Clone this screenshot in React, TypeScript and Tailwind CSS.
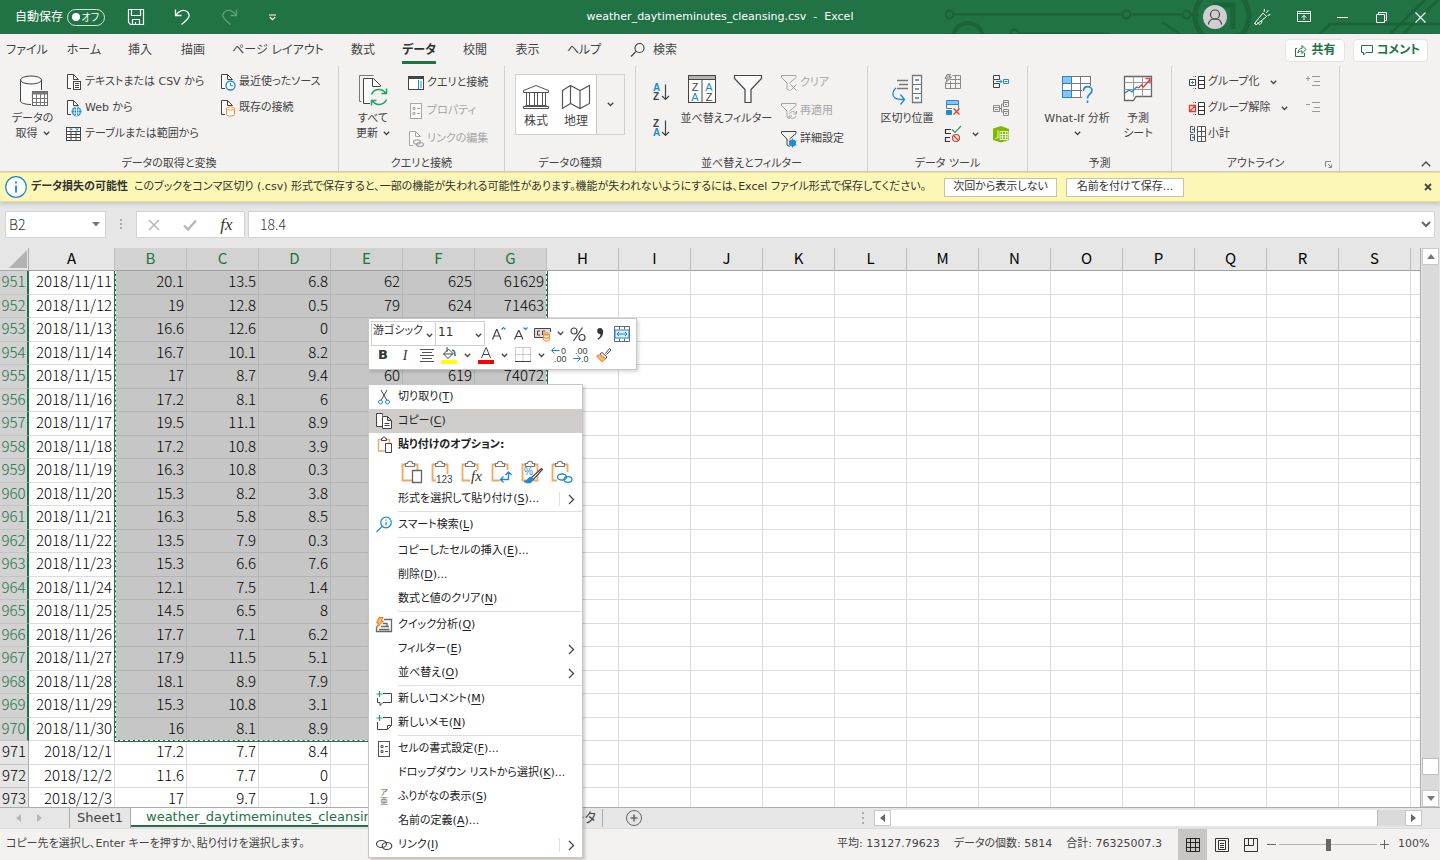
import { useState } from "react";
import type { ReactNode } from "react";
import clsx from "clsx";

const BLUE = "#1e88d2";
const GREEN = "#217346";

type IconProps = { w?: number; h?: number; color?: string; sw?: number; className?: string; children: ReactNode };

const Icon = ({ w = 18, h = 18, color = "#444", sw = 1, className, children }: IconProps) => (
  <svg
    width={w}
    height={h}
    viewBox={`0 0 ${w} ${h}`}
    fill="none"
    stroke={color}
    strokeWidth={sw}
    className={clsx("shrink-0", className)}
    aria-hidden="true"
  >
    {children}
  </svg>
);

const Chevron = ({ className, color = "#444" }: { className?: string; color?: string }) => (
  <Icon w={7} h={5} sw={1.3} color={color} className={className}>
    <path d="M.8.8l2.7 2.7L6.2.8" />
  </Icon>
);

/* ---------- ribbon icons ---------- */

const PageIcon = ({ children, color = "#444" }: { children?: ReactNode; color?: string }) => (
  <Icon color={color}>
    <path d="M6.5 15.500h-4v-14h7l5 4.500v2" fill="#fafafa" stroke="none" />
    <path d="M6 15.500H2.500v-14h6l5 5M8.500 1.500v5h5" />
    {children}
  </Icon>
);

const DatabaseIcon = () => (
  <Icon w={30} h={34}>
    <path d="M3 6v21c0 2 4.500 3 10 3V17h10V6z" fill="#fafafa" stroke="none" />
    <ellipse cx="13" cy="6" rx="10.500" ry="4" fill="#fafafa" />
    <path d="M2.500 6v21c0 2 4.500 3.500 10.500 3.500M23.500 6v10" />
    <rect x="14.500" y="17.500" width="15" height="14" fill="#fff" stroke="#666" />
    <path d="M14.500 19h15" strokeWidth="3" stroke="#777" />
    <path d="M14.500 24.500h15M14.500 28.500h15M18.500 18v14M22.500 18v14M26.500 18v14" stroke="#777" />
  </Icon>
);

const TextFileIcon = () => (
  <PageIcon>
    <rect x="8.500" y="8.500" width="7" height="8" fill="#fff" />
    <path d="M10 10.500h4M10 12.500h4M10 14.500h4" />
  </PageIcon>
);

const WebFileIcon = () => (
  <PageIcon>
    <circle cx="11.500" cy="12.500" r="4.500" fill="#1e88d2" stroke={BLUE} />
    <path d="M7.500 11h8M7.500 14h8M11.500 8v9" stroke="#fff" strokeWidth=".8" />
    <ellipse cx="11.500" cy="12.500" rx="2.200" ry="4.500" stroke="#fff" strokeWidth=".6" />
  </PageIcon>
);

const TableIcon = () => (
  <Icon>
    <rect x="1.500" y="2.500" width="14" height="13" fill="#fff" />
    <path d="M1.500 6.500h14M1.500 9.500h14M1.500 12.500h14M6 6.500v9M11 6.500v9" />
    <path d="M4 3.500h4l-2 2zM10 3.500h4l-2 2z" fill={BLUE} stroke="none" />
  </Icon>
);

const RecentIcon = () => (
  <PageIcon>
    <circle cx="11.500" cy="12.500" r="4.500" fill="#fff" stroke={BLUE} strokeWidth="1.300" />
    <path d="M11.500 9.800v3h2.500" stroke={BLUE} />
  </PageIcon>
);

const ConnectionIcon = () => (
  <PageIcon>
    <path d="M7.500 9.500v6c0 1 1.800 1.500 4 1.500s4-.5 4-1.500v-6" fill="#fff" stroke="#f28c28" />
    <ellipse cx="11.500" cy="9.500" rx="4" ry="1.500" fill="#fff" stroke="#f28c28" />
  </PageIcon>
);

const RefreshIcon = () => (
  <Icon w={30} h={34}>
    <path d="M3.500 27.500h-2v-26h14" stroke="#777" />
    <path d="M5.500 4.500h10l7 7v3h-9l-1 15h-7z" fill="#fafafa" stroke="none" />
    <path d="M12 29.500H5.500v-25h10l7.500 7.500M14.500 4.500v8h8" />
    <path d="M13.500 20.500a8 8 0 0 1 14-1.500M28.500 14.500v5h-5M28.500 25.500a8 8 0 0 1-14 1.500M13.500 31.500v-5h5" stroke="#21a366" strokeWidth="1.500" />
  </Icon>
);

const QueriesIcon = () => (
  <Icon>
    <rect x="1.500" y="2.500" width="15" height="13" fill="#fff" />
    <path d="M1.500 3.500h15" strokeWidth="3" />
    <path d="M11.500 6v9" stroke={BLUE} />
    <path d="M14 7v7" stroke="#8cc3ee" strokeWidth="2" />
  </Icon>
);

const PropertiesIcon = ({ color = "#a6a6a6" }: { color?: string }) => (
  <Icon color={color}>
    <rect x="3.500" y="1.500" width="11" height="15" fill="#fafafa" />
    <path d="M6 5.500h2v2H6zM6 10.500h2v2H6zM10 6.500h3M10 11.500h3" />
  </Icon>
);

const EditLinksIcon = () => (
  <PageIcon color="#a6a6a6">
    <ellipse cx="10" cy="12" rx="3.500" ry="2.200" strokeWidth="1.200" />
    <ellipse cx="13" cy="14.500" rx="3.500" ry="2" strokeWidth="1.200" />
  </PageIcon>
);

const StocksIcon = () => (
  <Icon w={28} h={26} color="#555">
    <path d="M1.500 8.500v-2L14 1.500l12.500 5v2zM3.500 21.500h21M1.500 24.500h25v-2h-25z" />
    <path d="M4.500 9v12M7.500 9v12M12.500 9v12M15.500 9v12M20.500 9v12M23.500 9v12" />
  </Icon>
);

const MapIcon = () => (
  <Icon w={30} h={26} color="#555" sw={1.2}>
    <path d="M1.500 6.500l8-5 9.500 5 9.500-5v18l-9.500 5-9.500-5-8 5zM9.500 1.500v18M19 6.500v18" />
  </Icon>
);

const SortIcon = ({ desc = false }: { desc?: boolean }) => (
  <Icon w={18} h={20}>
    <g stroke="none" fontSize="10" fontWeight="700" fontFamily="Liberation Sans, sans-serif">
      <text x="0" y="8" fill={desc ? "#444" : BLUE}>{desc ? "Z" : "A"}</text>
      <text x="0" y="17" fill={desc ? BLUE : "#444"}>{desc ? "A" : "Z"}</text>
    </g>
    <path d="M12.500 1.500v15M9 13l3.500 3.500L16 13" strokeWidth="1.200" />
  </Icon>
);

const SortDialogIcon = () => (
  <Icon w={30} h={30}>
    <rect x="1.500" y="1.500" width="27" height="27" fill="#fff" />
    <rect x="1.500" y="1.500" width="27" height="4" fill="#b4b4b4" />
    <path d="M15 5.500v23" />
    <g stroke="none" fontSize="11" fontFamily="Liberation Sans, sans-serif" textAnchor="middle">
      <text x="8" y="16.500" fill="#444">Z</text>
      <text x="8" y="27" fill={BLUE}>A</text>
      <text x="22" y="16.500" fill={BLUE}>A</text>
      <text x="22" y="27" fill="#444">Z</text>
    </g>
  </Icon>
);

const FilterIcon = () => (
  <Icon w={30} h={30} sw={1.2}>
    <path d="M1.500 1.500h27v3L18 15.500v13h-6v-13L1.500 4.500z" fill="#fafafa" />
  </Icon>
);

const FunnelSmall = ({ color = "#444", children }: { color?: string; children: ReactNode }) => (
  <Icon color={color}>
    <path d="M9.500 9l6.500-5.500v-2H1.500v2l5.500 5.500v6l2.500 1.500" />
    {children}
  </Icon>
);

const TextToColumnsIcon = () => (
  <Icon w={32} h={32} color="#777">
    <path d="M6 6.500h11M8 10.500h9M6 14.500h11" strokeWidth="1.500" />
    <path d="M5 14c-4 3-4 8-1 10 2 1.500 5 1.500 9 1.500M9.500 20.500l4 5-4 5" stroke={BLUE} strokeWidth="1.300" />
    <path d="M21.500 1.500h9v27h-9z" fill="#fff" strokeWidth="1.300" />
    <path d="M21.500 10.500h9M21.500 19.500h9" />
    <path d="M24 6h4M24 15h4M24 24h4" stroke={BLUE} strokeWidth="1.500" />
  </Icon>
);

const FlashFillIcon = () => (
  <Icon color="#8a8a8a">
    <path d="M8.500 2.500h8v13h-15V9.500M6 6.500h10.500M1.500 10.500h15M6.500 8v7.500M11.500 2.500v13" />
    <path d="M3 1.500h3.500L5 4h2.500L2 9.500l1-4H1z" fill="#bbb" />
  </Icon>
);

const RemoveDuplicatesIcon = () => (
  <Icon color={BLUE}>
    <path d="M2.500 1.500h12v4h-12z" fill="#8cc3ee" />
    <path d="M2.500 5.500v4h5.500M14.500 5.500v4" stroke="#777" />
    <path d="M2.500 11.500h5v4h-5z" fill={BLUE} />
    <path d="M9.500 9.500l6 6M15.500 9.500l-6 6" stroke="#e03c31" strokeWidth="1.300" />
  </Icon>
);

const ValidationIcon = () => (
  <Icon color="#333" sw={1.2}>
    <path d="M7 4.500H1.500v4H7M6 12.500H1.500v4H6" />
    <path d="M8 4.500l3 3 6-6.500" stroke="#21a366" />
    <circle cx="12" cy="13" r="3.500" stroke="#e03c31" />
    <path d="M9.500 10.500l5 5" stroke="#e03c31" />
  </Icon>
);

const ConsolidateIcon = () => (
  <Icon>
    <path d="M1.500 2.500h6v4h-6zM1.500 10.500h6v4h-6zM1.500 6.500v4" />
    <path d="M4 8.500h6M8 6.500l2 2-2 2" stroke={BLUE} />
    <path d="M11.500 6.500h5v4h-5z" stroke={BLUE} fill="#fff" />
    <path d="M12.500 8.500h3" stroke={BLUE} />
  </Icon>
);

const RelationshipsIcon = () => (
  <Icon color="#8a8a8a">
    <path d="M1.500 6.500h6v6h-6zM11.500 1.500h5v6h-5zM11.500 10.500h5v6h-5zM1.500 8.500h6M11.500 3.500h5M11.500 12.500h5M7.500 9.500h2M11.500 5h-2v8h2M3 10.500h3M13 5.500h2M13 14.500h2" />
  </Icon>
);

const DataModelIcon = () => (
  <Icon color="#fff">
    <path d="M1 3.500L9 1l8 3v11l-8 2.500-8-2.500z" fill="#7fba00" stroke="none" />
    <path d="M8 6.500h8v8H8zM8 9.500h8M8 12h8M10.500 6.500v8M13.500 6.500v8M6 5v8c-1-.6-2.500 0-2.500 1" strokeWidth=".8" />
  </Icon>
);

const WhatIfIcon = () => (
  <Icon w={32} h={30} color="#777">
    <rect x="1.500" y="2.500" width="28" height="21" fill="#fff" />
    <path d="M10.500 2.500v21M19.500 2.500v21M1.500 9.500h28M1.500 16.500h28" />
    <path d="M1.500 2.500h9v7h-9zM1.500 16.500h9v7h-9z" fill="#8cc3ee" stroke={BLUE} />
    <path d="M21 12h10.500v17H21z" fill="#f3f2f1" stroke="none" />
    <path d="M22.500 17c0-6 8.500-5.500 8.500-.5 0 3.500-4.500 3.500-4.500 8M26.500 26.500v2.500" stroke={BLUE} strokeWidth="1.600" />
  </Icon>
);

const ForecastIcon = () => (
  <Icon w={30} h={28} color="#666">
    <path d="M1.500 2.500h27v20H13l-2.500 4h-9z" fill="#fff" strokeWidth="1.300" />
    <path d="M1.500 8.500h27M1.500 15.500h27M10.500 2.500v20M19.500 2.500v20" stroke="#999" />
    <path d="M2 19l4-3 3 2 4.500-5 2 1" stroke={BLUE} strokeWidth="1.300" />
    <path d="M15.500 14l3-3 2 2L27 5.500M22.500 4.500H27v5" stroke="#e03c31" strokeWidth="1.300" />
  </Icon>
);

const GroupIcon = ({ ungroup = false }: { ungroup?: boolean }) => (
  <Icon color="#333">
    <path d="M10.500 3.500h6v12h-6zM10.500 7.500h6M10.500 11.500h6" fill="#fff" />
    <path d="M8 3.500H5.500M8 15.500H5.500" strokeDasharray="1 1" />
    {ungroup ? (
      <path d="M1.500 6.500h6v6h-6zM2 12l5-5" stroke="#e03c31" strokeWidth="1.300" />
    ) : (
      <>
        <path d="M1.500 6.500h6v6h-6z" fill="#fff" stroke="#444" />
        <path d="M3 9.500h3M4.500 8v3" stroke={BLUE} />
      </>
    )}
  </Icon>
);

const SubtotalIcon = () => (
  <Icon color="#555">
    <path d="M2.500 1.500h3M2.500 7.500h3M2.500 9.500h3M2.500 15.500h3M2.500 1.500v6M2.500 9.500v6M6.500 1.500v6M6.500 9.500v6" />
    <path d="M4 4.500h2M5 3.500v2M4 12.500h2M5 11.500v2" stroke={BLUE} />
    <path d="M9.500 1.500h8v15h-8zM13.500 1.500v15M9.500 6.500h8M9.500 11.500h8" fill="#fff" />
  </Icon>
);

const DetailIcon = ({ plus = false }: { plus?: boolean }) => (
  <Icon color="#999">
    <path d="M1 5.500h4M7 3.500h8M9 8.500h6M7 12.500h8" />
    {plus && <path d="M3 3v5" />}
  </Icon>
);

/* ---------- ribbon pieces ---------- */

const Group = ({ label, className, children, launcher }: { label: string; className: string; children: ReactNode; launcher?: boolean }) => (
  <section className={clsx("relative flex shrink-0 flex-col border-r border-[#d2d0ce]", className)}>
    <div className="flex h-[91px] items-start pt-[3px]">{children}</div>
    <h2 className="text-center leading-[14px]">{label}</h2>
    {launcher && (
      <button aria-label="アウトラインの設定" className="absolute right-[6px] bottom-[2px]">
        <Icon w={8} h={8} color="#888"><path d="M.5 6V.5H6M3 3l3.500 3.500M6.500 3.500v3h-3" /></Icon>
      </button>
    )}
  </section>
);

const BigButton = ({ icon, lines, arrow, className }: { icon: ReactNode; lines: string[]; arrow?: boolean; className: string }) => (
  <button className={clsx("flex shrink-0 flex-col items-center pt-[5px]", className)}>
    <span className="flex h-[37px] items-start">{icon}</span>
    {lines.map((line, i) => (
      <span key={line} className="flex h-[15px] items-center gap-[5px] leading-[15px]">
        {line}
        {arrow && i === lines.length - 1 && lines.length > 1 && <Chevron />}
      </span>
    ))}
    {arrow && lines.length === 1 && <Chevron className="mt-[5px]" />}
  </button>
);

const SmallButton = ({ icon, label, arrow, disabled, tall }: { icon: ReactNode; label?: string; arrow?: boolean; disabled?: boolean; tall?: boolean }) => (
  <button
    disabled={disabled}
    aria-label={label ? undefined : "ツール"}
    className={clsx("flex items-center gap-[2px]", tall ? "h-[28px]" : "h-[26px]", disabled && "text-[#a6a6a6]")}
  >
    {icon}
    {label}
    {arrow && <Chevron className="ml-[8px]" />}
  </button>
);

const Ribbon = () => (
  <div className="flex h-[106px] border-b border-[#d2d0ce] text-[11px] text-[#444]">
    <Group label="データの取得と変換" className="w-[339px]">
      <BigButton className="w-[65px]" icon={<DatabaseIcon />} lines={["データの", "取得"]} arrow />
      <div className="w-[154px]">
        <SmallButton icon={<TextFileIcon />} label="テキストまたは CSV から" />
        <SmallButton icon={<WebFileIcon />} label="Web から" />
        <SmallButton icon={<TableIcon />} label="テーブルまたは範囲から" />
      </div>
      <div>
        <SmallButton icon={<RecentIcon />} label="最近使ったソース" />
        <SmallButton icon={<ConnectionIcon />} label="既存の接続" />
      </div>
    </Group>
    <Group label="クエリと接続" className="w-[166px]">
      <BigButton className="w-[68px]" icon={<RefreshIcon />} lines={["すべて", "更新"]} arrow />
      <div>
        <SmallButton tall icon={<QueriesIcon />} label="クエリと接続" />
        <SmallButton tall disabled icon={<PropertiesIcon />} label="プロパティ" />
        <SmallButton tall disabled icon={<EditLinksIcon />} label="リンクの編集" />
      </div>
    </Group>
    <Group label="データの種類" className="w-[131px]">
      <div className="mt-[5px] ml-[10px] flex h-[61px] border border-[#d2d0ce] text-[12px]">
        <div className="flex bg-white">
          <button className="flex w-[40px] flex-col items-center gap-[4px] pt-[9px] leading-[15px]"><StocksIcon />株式</button>
          <button className="flex w-[40px] flex-col items-center gap-[4px] pt-[9px] leading-[15px]"><MapIcon />地理</button>
        </div>
        <button aria-label="データの種類の一覧" className="flex w-[28px] items-center justify-center border-l border-[#c8c6c4]"><Chevron /></button>
      </div>
    </Group>
    <Group label="並べ替えとフィルター" className="w-[232px]">
      <div className="ml-[17px] flex w-[27px] flex-col gap-[16px] pt-[14px]">
        <button aria-label="昇順"><SortIcon /></button>
        <button aria-label="降順"><SortIcon desc /></button>
      </div>
      <BigButton className="w-[44px]" icon={<SortDialogIcon />} lines={["並べ替え"]} />
      <BigButton className="w-[48px]" icon={<FilterIcon />} lines={["フィルター"]} />
      <div className="ml-[8px]">
        <SmallButton tall disabled icon={<FunnelSmall color="#a6a6a6"><path d="M10.500 10.500l6 6M16.500 10.500l-6 6" /></FunnelSmall>} label="クリア" />
        <SmallButton tall disabled icon={<FunnelSmall color="#a6a6a6"><path d="M9.500 12a3.500 3.500 0 0 1 6.500-.5M16.500 9v3h-3M16 14a3.500 3.500 0 0 1-6.500.5M9 17v-3h3" /></FunnelSmall>} label="再適用" />
        <SmallButton
          tall
          icon={
            <FunnelSmall>
              <circle cx="12.500" cy="13" r="2.500" stroke={BLUE} strokeWidth="2" />
              <path d="M12.500 8.500v9M8.500 10.800l8 4.400M16.500 10.800l-8 4.400" stroke={BLUE} />
            </FunnelSmall>
          }
          label="詳細設定"
        />
      </div>
    </Group>
    <Group label="データ ツール" className="w-[160px]">
      <BigButton className="ml-[10px] w-[58px]" icon={<TextToColumnsIcon />} lines={["区切り位置"]} />
      <div className="ml-[8px] w-[48px]">
        <SmallButton icon={<FlashFillIcon />} />
        <SmallButton icon={<RemoveDuplicatesIcon />} />
        <SmallButton icon={<ValidationIcon />} arrow />
      </div>
      <div>
        <SmallButton icon={<ConsolidateIcon />} />
        <SmallButton icon={<RelationshipsIcon />} />
        <SmallButton icon={<DataModelIcon />} />
      </div>
    </Group>
    <Group label="予測" className="w-[144px]">
      <BigButton className="ml-[10px] w-[78px]" icon={<WhatIfIcon />} lines={["What-If 分析"]} arrow />
      <BigButton className="w-[44px]" icon={<ForecastIcon />} lines={["予測", "シート"]} />
    </Group>
    <Group label="アウトライン" className="w-[168px]" launcher>
      <div className="ml-[16px] w-[117px]">
        <SmallButton icon={<GroupIcon />} label="グループ化" arrow />
        <SmallButton icon={<GroupIcon ungroup />} label="グループ解除" arrow />
        <SmallButton icon={<SubtotalIcon />} label="小計" />
      </div>
      <div>
        <SmallButton icon={<DetailIcon plus />} />
        <SmallButton icon={<DetailIcon />} />
      </div>
    </Group>
    <button aria-label="リボンを折りたたむ" className="mt-auto mr-[9px] mb-[4px] ml-auto">
      <Icon w={10} h={6} sw={1.3}><path d="M.8 5.200L5 1l4.200 4.200" /></Icon>
    </button>
  </div>
);

/* ---------- title bar and tabs ---------- */

const TitleBar = () => (
  <header className="relative flex h-[34px] items-center bg-[#217346] text-[12px] text-white">
    <svg className="absolute top-0 right-0" width="495" height="34" viewBox="0 0 495 34" fill="none" stroke="#1b643b" strokeWidth="2.500" aria-hidden="true">
      <circle cx="4.500" cy="14.500" r="4" />
      <path d="M9 14.500h168M186 14.500h50M246 14.500h8" />
      <circle cx="181.500" cy="14.500" r="4" />
      <circle cx="241.500" cy="14.500" r="4" />
      <circle cx="23" cy="38" r="15" strokeWidth="4" />
      <circle cx="69.500" cy="33.500" r="4" />
      <path d="M74 33.500h90M217 22l18 12" />
      <circle cx="277" cy="16" r="27" strokeWidth="5" />
      <path d="M268 5h20v24" strokeWidth="5" />
      <path d="M375 34l10-10h110M445 34L480 0M458 34L495 -2" strokeWidth="3" />
    </svg>
    <label className="ml-[15px] flex items-center gap-[4px]">
      自動保存
      <input type="checkbox" className="peer sr-only" />
      <span className="flex h-[17px] w-[38px] items-center justify-between rounded-full border border-white/80 pr-[5px] pl-[4px] text-[10px]">
        <span className="size-[8px] rounded-full bg-white" />
        オフ
      </span>
    </label>
    <button aria-label="上書き保存" className="ml-[22px]">
      <Icon color="#fff" sw={1.2}><path d="M1.500 1.500h15v15h-13l-2-2zM4.500 1.500v6h9v-6M5.500 16.500v-5h7v5M8.500 14v2.500" /></Icon>
    </button>
    <button aria-label="元に戻す" className="ml-[29px]">
      <Icon color="#fff" sw={1.3}><path d="M1.500 1.500v6h6M2 7c3-4.500 8-6 11.500-3 3.500 3.500 1.500 6.500-6 12.500" /></Icon>
    </button>
    <button aria-label="やり直し" className="ml-[29px] opacity-30">
      <Icon color="#fff" sw={1.3}><path d="M15.500 1.500v6h-6M15 7c-3-4.500-8-6-11.500-3-3.500 3.500-1.500 6.500 6 12.500" /></Icon>
    </button>
    <button aria-label="クイック アクセス ツール バーのカスタマイズ" className="ml-[29px]">
      <Icon w={9} h={7} color="#fff" sw={1.2}><path d="M1 1h7M1.800 3l2.700 2.700L7.200 3" /></Icon>
    </button>
    <h1 className="absolute left-1/2 -translate-x-1/2 text-[11px] whitespace-pre">weather_daytimeminutes_cleansing.csv  -  Excel</h1>
    <div className="relative ml-auto flex items-center">
      <button aria-label="アカウント" className="mr-[26px] flex size-[24px] items-center justify-center rounded-full bg-[#d0cece]">
        <Icon w={16} h={18} sw={1.2}><circle cx="8" cy="6.500" r="4.500" /><path d="M1.500 16.500c0-7.500 13-7.500 13 0" /></Icon>
      </button>
      <button aria-label="新機能" className="mr-[26px]">
        <Icon color="#fff"><path d="M1.500 15.500L10 5l3.500 3.500L3.500 16.500zM1.500 15.500l2 1M5 14.500c1 3 3 2.500 4-1.500M11 4l.5-3M13 5l2.500-3M14.500 7.500l3-1" /></Icon>
      </button>
      <button aria-label="リボンの表示オプション" className="mr-[26px]">
        <Icon w={14} h={12} color="#fff"><path d="M.5.500h13v10H.500zM.5 2.500h13M7 9V4.500M4.800 6.500L7 4.300l2.200 2.200" /></Icon>
      </button>
      <button aria-label="最小化" className="mr-[28px]"><Icon w={11} h={10} color="#fff"><path d="M0 5.500h11" /></Icon></button>
      <button aria-label="元のサイズに戻す" className="mr-[28px]"><Icon w={11} h={11} color="#fff"><path d="M.5 2.500h8v8h-8zM2.500 2.500v-2h8v8h-2" /></Icon></button>
      <button aria-label="閉じる" className="mr-[14px]"><Icon w={11} h={11} color="#fff" sw={1.2}><path d="M.5.500l10 10M10.500.500l-10 10" /></Icon></button>
    </div>
  </header>
);

const TABS = [
  { name: "ファイル", width: "w-[54px]" },
  { name: "ホーム", width: "w-[60px]" },
  { name: "挿入", width: "w-[52px]" },
  { name: "描画", width: "w-[54px]" },
  { name: "ページ レイアウト", width: "w-[116px]" },
  { name: "数式", width: "w-[54px]" },
  { name: "データ", width: "w-[58px]" },
  { name: "校閲", width: "w-[54px]" },
  { name: "表示", width: "w-[51px]" },
  { name: "ヘルプ", width: "w-[62px]" },
];

const TabBar = () => {
  const [active, setActive] = useState("データ");

  return (
    <nav className="flex h-[32px] items-center text-[12px] text-[#444]">
      {TABS.map((tab) => (
        <button
          key={tab.name}
          onClick={() => setActive(tab.name)}
          className={clsx("flex h-[32px] shrink-0 items-center justify-center", tab.width)}
        >
          <span className={clsx("border-b-[3px] pt-[2px] leading-[22px]", active === tab.name ? "border-[#217346] font-bold text-[#333]" : "border-transparent")}>
            {tab.name}
          </span>
        </button>
      ))}
      <button className="ml-[15px] flex items-center gap-[7px]">
        <Icon w={16} h={16} sw={1.2}><circle cx="9.500" cy="6" r="4.500" /><path d="M6 9.500L1 14.500" /></Icon>
        検索
      </button>
      <div className="mr-[12px] ml-auto flex gap-[8px] font-bold text-[#217346]">
        <button className="flex h-[23px] w-[60px] items-center justify-center gap-[4px] rounded-sm border border-[#e6e4e2] bg-white">
          <Icon w={13} h={13} color={GREEN}><path d="M3 4.500H1.500v8h9V9M4 9c0-3.500 2-4.500 4-4.500v-3l4 4-4 4v-2.500c-2 0-3 .5-4 2z" /></Icon>
          共有
        </button>
        <button className="flex h-[23px] w-[75px] items-center justify-center gap-[4px] rounded-sm border border-[#e6e4e2] bg-white">
          <Icon w={12} h={12} color={GREEN}><path d="M.5 1.500h11v7H5l-2.500 2.500V8.500h-2z" /></Icon>
          コメント
        </button>
      </div>
    </nav>
  );
};

const InfoBar = () => (
  <div className="relative z-10 flex h-[30px] items-center border-y border-[#e8de8a] bg-[#fcf7b6] text-[11px] text-[#333] shadow-[0_2px_4px_rgba(0,0,0,0.15)]">
    <Icon w={22} h={22} color={BLUE} className="ml-[5px]" sw={1.2}>
      <circle cx="11" cy="11" r="10.300" fill="#fff" />
      <path d="M11 9.500v7M11 5.500v2" strokeWidth="1.800" />
    </Icon>
    <p className="ml-[4px] w-[913px] shrink-0">
      <strong className="mr-[6px]">データ損失の可能性</strong>
      このブックをコンマ区切り (.csv) 形式で保存すると、一部の機能が失われる可能性があります。機能が失われないようにするには、Excel ファイル形式で保存してください。
    </p>
    <button className="h-[19px] w-[113px] shrink-0 border border-[#c8c6a0] bg-white leading-[16px]">次回から表示しない</button>
    <button className="ml-[9px] h-[19px] w-[118px] shrink-0 border border-[#c8c6a0] bg-white leading-[16px]">名前を付けて保存...</button>
    <button aria-label="メッセージを閉じる" className="mr-[8px] ml-auto">
      <Icon w={8} h={8} sw={1.8}><path d="M1 1l6 6M7 1L1 7" /></Icon>
    </button>
  </div>
);

const FormulaBar = () => (
  <div className="flex h-[46px] items-start bg-[#e6e6e6] pt-[9px] pr-[5px] pl-[5px] font-[Noto_Sans_CJK_JP,sans-serif] text-[14px] font-light text-[#333]">
    <div className="flex h-[27px] w-[101px] items-center border border-[#d4d4d4] bg-white">
      <input aria-label="名前ボックス" defaultValue="B2" className="w-[86px] pl-[3px] outline-none" />
      <button aria-label="名前の一覧"><Icon w={9} h={5}><path d="M0 0h8L4 4.500z" fill="#777" stroke="none" /></Icon></button>
    </div>
    <Icon w={30} h={27}><path d="M14 8h2v2h-2zM14 12h2v2h-2zM14 16h2v2h-2z" fill="#aaa" stroke="none" /></Icon>
    <div className="flex h-[27px] w-[109px] items-center justify-around border border-[#d4d4d4] bg-white">
      <button aria-label="キャンセル"><Icon w={12} h={12} color="#b8b8b8" sw={1.6}><path d="M1 1l10 10M11 1L1 11" /></Icon></button>
      <button aria-label="入力"><Icon w={14} h={12} color="#b8b8b8" sw={2.4}><path d="M1 6.500l4 4L13 1.500" /></Icon></button>
      <button className="font-[Liberation_Serif,serif] text-[17px] font-normal italic">fx</button>
    </div>
    <div className="ml-[3px] flex h-[27px] flex-1 items-center border border-[#d4d4d4] bg-white">
      <input aria-label="数式バー" defaultValue="18.4" className="flex-1 pl-[11px] outline-none" />
      <button aria-label="数式バーの展開" className="mr-[3px]"><Icon w={10} h={7} sw={2} color="#666"><path d="M1 1l4 4 4-4" /></Icon></button>
    </div>
  </div>
);

/* ---------- sheet ---------- */

const COLUMNS = "ABCDEFGHIJKLMNOPQRST".split("");

const ROWS: string[][] = [
  ["951", "2018/11/11", "20.1", "13.5", "6.8", "62", "625", "61629"],
  ["952", "2018/11/12", "19", "12.8", "0.5", "79", "624", "71463"],
  ["953", "2018/11/13", "16.6", "12.6", "0"],
  ["954", "2018/11/14", "16.7", "10.1", "8.2"],
  ["955", "2018/11/15", "17", "8.7", "9.4", "60", "619", "74072"],
  ["956", "2018/11/16", "17.2", "8.1", "6"],
  ["957", "2018/11/17", "19.5", "11.1", "8.9"],
  ["958", "2018/11/18", "17.2", "10.8", "3.9"],
  ["959", "2018/11/19", "16.3", "10.8", "0.3"],
  ["960", "2018/11/20", "15.3", "8.2", "3.8"],
  ["961", "2018/11/21", "16.3", "5.8", "8.5"],
  ["962", "2018/11/22", "13.5", "7.9", "0.3"],
  ["963", "2018/11/23", "15.3", "6.6", "7.6"],
  ["964", "2018/11/24", "12.1", "7.5", "1.4"],
  ["965", "2018/11/25", "14.5", "6.5", "8"],
  ["966", "2018/11/26", "17.7", "7.1", "6.2"],
  ["967", "2018/11/27", "17.9", "11.5", "5.1"],
  ["968", "2018/11/28", "18.1", "8.9", "7.9"],
  ["969", "2018/11/29", "15.3", "10.8", "3.1"],
  ["970", "2018/11/30", "16", "8.1", "8.9"],
  ["971", "2018/12/1", "17.2", "7.7", "8.4"],
  ["972", "2018/12/2", "11.6", "7.7", "0"],
  ["973", "2018/12/3", "17", "9.7", "1.9"],
];

const LAST_SELECTED_ROW = 970;
const isSelectedColumn = (i: number) => i >= 1 && i <= 6;

const Sheet = () => (
  <div className="relative min-w-0 flex-1 overflow-hidden border-r border-[#ababab] bg-white">
    <table className="w-[1483px] table-fixed border-separate border-spacing-0 font-[Noto_Sans_CJK_JP,sans-serif] text-[15px] leading-[20px] font-light text-black">
      <colgroup>
        <col className="w-[29px]" />
        <col className="w-[86px]" />
        {COLUMNS.slice(1).map((c) => <col key={c} className="w-[72px]" />)}
      </colgroup>
      <thead>
        <tr className="h-[23px] bg-[#e6e6e6]">
          <th className="border-r border-b border-[#ababab] p-0">
            <svg width="20" height="20" viewBox="0 0 20 20" className="ml-auto block" aria-hidden="true"><path d="M19 1v18H1z" fill="#b2b2b2" /></svg>
          </th>
          {COLUMNS.map((c, i) => (
            <th
              key={c}
              scope="col"
              className={clsx(
                "border-r border-b border-b-[#9f9f9f] border-r-[#bdbdbd] p-0 align-top font-normal",
                isSelectedColumn(i) && "bg-[#d2d2d2] text-[#217346]"
              )}
            >
              {c}
            </th>
          ))}
        </tr>
      </thead>
      <tbody>
        {ROWS.map(([num, ...cells]) => {
          const selectedRow = Number(num) <= LAST_SELECTED_ROW;
          return (
            <tr key={num} className="align-top odd:h-[24px] even:h-[23px]">
              <th
                scope="row"
                className={clsx(
                  "border-b border-b-[#c4c4c4] p-0 text-center font-light",
                  selectedRow ? "border-r-2 border-r-[#217346] bg-[#d2d2d2] text-[#217346]" : "border-r border-r-[#ababab] bg-[#e6e6e6]"
                )}
              >
                {num}
              </th>
              {COLUMNS.map((c, i) => (
                <td
                  key={c}
                  className={clsx(
                    "border-r border-b py-0 pr-[2px] pl-0 text-right",
                    selectedRow && isSelectedColumn(i) ? "border-[#b4b4b4] bg-[#c6c6c6]" : "border-[#dcdcdc]"
                  )}
                >
                  {cells[i]}
                </td>
              ))}
            </tr>
          );
        })}
      </tbody>
    </table>
    {/* marching ants around the copied range */}
    <div className="absolute top-[23px] left-[114px] h-[471px] w-[434px] border-2 border-t-0 border-[#217346]">
      <div className="absolute -inset-px top-0 border border-t-0 border-dashed border-white" />
    </div>
  </div>
);

const VerticalScrollbar = () => (
  <div className="mx-[1px] flex w-[17px] flex-col bg-[#dadada]">
    <button aria-label="上へ" className="flex h-[17px] items-center justify-center border border-[#c8c8c8] bg-white">
      <Icon w={8} h={5}><path d="M0 5h8L4 0z" fill="#777" stroke="none" /></Icon>
    </button>
    <div className="mt-auto h-[17px] border border-[#c0c0c0] bg-white" />
    <button aria-label="下へ" className="mt-[15px] flex h-[17px] items-center justify-center border border-[#c8c8c8] bg-white">
      <Icon w={8} h={5}><path d="M0 0h8L4 5z" fill="#777" stroke="none" /></Icon>
    </button>
  </div>
);

const SheetTabs = () => (
  <div className="flex h-[21px] items-stretch border-t border-[#ababab] bg-[#e6e6e6] text-[13px] leading-[18px] text-[#444]">
    <div className="flex w-[69px] items-center gap-[16px] pl-[16px]">
      <button aria-label="前のシート"><Icon w={5} h={8}><path d="M5 0v8L0 4z" fill="#b8b8b8" stroke="none" /></Icon></button>
      <button aria-label="次のシート"><Icon w={5} h={8}><path d="M0 0v8l5-4z" fill="#b8b8b8" stroke="none" /></Icon></button>
    </div>
    <button className="w-[62px] border-x border-[#ababab]">Sheet1</button>
    <button className="h-[19px] w-[271px] overflow-hidden border-b-2 border-[#217346] bg-white pl-[15px] text-left text-[#217346]">weather_daytimeminutes_cleansing</button>
    <button className="my-px w-[201px] border-r border-[#ababab] pr-[6px] text-right">データ</button>
    <button aria-label="新しいシート" className="ml-[22px] self-center">
      <Icon color="#666"><circle cx="9" cy="9" r="7.500" /><path d="M9 5.500v7M5.500 9h7" strokeWidth="1.600" /></Icon>
    </button>
    <Icon w={4} h={18} className="ml-auto"><path d="M1 4h2v2H1zM1 9h2v2H1zM1 14h2v2H1z" fill="#aaa" stroke="none" /></Icon>
    <div className="my-[2px] mr-[18px] ml-[9px] flex w-[548px] bg-[#dadada]">
      <button aria-label="左へ" className="flex w-[17px] items-center justify-center border border-[#c8c8c8] bg-white">
        <Icon w={5} h={8}><path d="M5 0v8L0 4z" fill="#666" stroke="none" /></Icon>
      </button>
      <div className="w-[487px] border-r border-[#b8b8b8] bg-white" />
      <button aria-label="右へ" className="ml-auto flex w-[17px] items-center justify-center border border-[#c8c8c8] bg-white">
        <Icon w={5} h={8}><path d="M0 0v8l5-4z" fill="#666" stroke="none" /></Icon>
      </button>
    </div>
  </div>
);

const StatusBar = () => (
  <footer className="flex h-[32px] items-center border-t border-[#dcdcdc] bg-[#f3f2f1] pl-[6px] text-[11px] text-[#444]">
    <p>コピー先を選択し、Enter キーを押すか、貼り付けを選択します。</p>
    <div className="ml-auto flex gap-[14px] pr-[16px]">
      <span>平均: 13127.79623</span>
      <span>データの個数: 5814</span>
      <span>合計: 76325007.3</span>
    </div>
    <button aria-label="標準" className="flex h-full w-[29px] items-center justify-center bg-[#c8c6c4]">
      <Icon w={14} h={14} color="#222"><path d="M.5.500h13v13H.500zM.5 4.500h13M.5 9.500h13M4.500.500v13M9.500.500v13" /></Icon>
    </button>
    <button aria-label="ページ レイアウト" className="flex w-[29px] items-center justify-center">
      <Icon w={14} h={14} color="#333"><path d="M.5.500h13v13H.500zM3.500 2.500h7v9h-7zM5 5.500h4M5 7.500h4M5 9.500h4" /></Icon>
    </button>
    <button aria-label="改ページ プレビュー" className="flex w-[29px] items-center justify-center">
      <Icon w={14} h={14} color="#333"><path d="M.5.500h13v13H.500zM4.500.500v7M.5 7.500h9M9.500.500v7" /></Icon>
    </button>
    <button aria-label="縮小" className="ml-[2px]"><Icon w={9} h={9} color="#666"><path d="M0 4.500h9" /></Icon></button>
    <input
      type="range"
      aria-label="ズーム"
      defaultValue={50}
      className="mx-[3px] h-[12px] w-[98px] appearance-none bg-[linear-gradient(#b8b6b4,#b8b6b4)] bg-[length:100%_1px] bg-center bg-no-repeat [&::-webkit-slider-thumb]:h-[12px] [&::-webkit-slider-thumb]:w-[5px] [&::-webkit-slider-thumb]:appearance-none [&::-webkit-slider-thumb]:bg-[#666]"
    />
    <button aria-label="拡大"><Icon w={9} h={9} color="#666"><path d="M0 4.500h9M4.500 0v9" /></Icon></button>
    <span className="w-[51px] pl-[9px]">100%</span>
  </footer>
);

/* ---------- mini toolbar ---------- */

const MiniButton = ({ label, className, children }: { label: string; className: string; children: ReactNode }) => (
  <button aria-label={label} className={clsx("flex h-[22px] shrink-0 items-center justify-center", className)}>{children}</button>
);

const DecimalIcon = ({ increase = false }: { increase?: boolean }) => (
  <Icon w={18} h={18}>
    <g stroke="none" fill="#444" fontSize="9" fontFamily="Liberation Sans, sans-serif">
      <text x={increase ? 11 : 3} y="8">{increase ? "0" : ".00"}</text>
      <text x={increase ? 4 : 9} y="16">{increase ? ".00" : ".0"}</text>
    </g>
    {increase ? <path d="M9.500 4.500H1.500M4.500 1.500l-3 3 3 3" stroke={BLUE} /> : <path d="M1 12.500h7M5.500 9.500l3 3-3 3" stroke={BLUE} />}
  </Icon>
);

const MiniToolbar = () => (
  <div role="toolbar" aria-label="ミニ ツール バー" className="absolute top-[70px] left-[368px] z-20 h-[52px] w-[269px] border border-[#c8c6c4] bg-white text-[#333] shadow-[2px_2px_3px_rgba(0,0,0,0.15)]">
    <div className="flex items-center pt-[2px] pl-[2px]">
      <span className="relative flex">
        <select aria-label="フォント" className="h-[25px] w-[65px] appearance-none border border-[#d2d0ce] pb-[4px] pl-[1px] text-[11px]">
          <option>游ゴシック</option>
        </select>
        <Chevron className="pointer-events-none absolute top-[12px] right-[3px]" />
      </span>
      <span className="relative flex">
        <select aria-label="フォント サイズ" className="h-[25px] w-[49px] appearance-none border border-l-0 border-[#d2d0ce] pb-[4px] pl-[2px] text-[12px]">
          <option>11</option>
        </select>
        <Chevron className="pointer-events-none absolute top-[12px] right-[3px]" />
      </span>
      <MiniButton label="フォント サイズの拡大" className="ml-[3px] w-[22px]">
        <Icon w={16} h={16} sw={1.2}><path d="M1.500 13.500l4-10h.5l4 10M3 10h6" /><path d="M10.500 3.500l2-2 2 2" stroke={BLUE} /></Icon>
      </MiniButton>
      <MiniButton label="フォント サイズの縮小" className="w-[22px]">
        <Icon w={16} h={16} sw={1.2}><path d="M1.500 13.500l4-9h.5l4 9M3 10.500h6" /><path d="M10.500 1.500l2 2 2-2" stroke={BLUE} /></Icon>
      </MiniButton>
      <MiniButton label="通貨表示形式" className="w-[34px] gap-[6px]">
        <Icon w={17} h={16}>
          <path d="M16.500 6V2.500H.500v9H9" fill="#ddd" />
          <path d="M6 5H3.500v4H6M11 5H8.500v4" />
          <path d="M9.500 8.500v5c0 1 1.500 1.500 3 1.500s3-.5 3-1.500v-5z" fill="#fde3c8" stroke="#f28c28" />
          <path d="M9.500 8c0-1.500 6-1.500 6 0s-6 1.500-6 0M9.500 11c1 1.500 5 1.500 6 0" stroke="#f28c28" />
        </Icon>
        <Chevron />
      </MiniButton>
      <MiniButton label="パーセント" className="w-[24px]">
        <Icon w={16} h={16} sw={1.2}><circle cx="4" cy="5" r="3" /><circle cx="12" cy="11.500" r="3" /><path d="M12.500 1.500l-9 13.500" /></Icon>
      </MiniButton>
      <MiniButton label="桁区切り" className="w-[20px]">
        <Icon w={8} h={14}><path d="M4 1a3 3 0 1 0 .5 6C4.500 9 3.500 10.500 1.500 11.500l.8 1.200C8.500 9.500 8.500 1 4 1z" fill="#333" stroke="none" /></Icon>
      </MiniButton>
      <MiniButton label="セルを結合" className="w-[24px]">
        <Icon w={16} h={16} color="#666">
          <path d="M.5.500h15v15H.500zM5.500.500v3M10.500.500v3M5.500 12.500v3M10.500 12.500v3" />
          <rect x="1" y="4" width="14" height="8" fill="#d9ecfa" stroke={BLUE} />
          <path d="M3 8h10M5 6L3 8l2 2M11 6l2 2-2 2" stroke={BLUE} />
        </Icon>
      </MiniButton>
    </div>
    <div className="-mt-[2px] flex items-center pl-[3px]">
      <MiniButton label="太字" className="w-[22px]"><span className="text-[13px] font-bold">B</span></MiniButton>
      <MiniButton label="斜体" className="w-[22px]"><span className="font-[Liberation_Serif,serif] text-[14px] italic">I</span></MiniButton>
      <MiniButton label="中央揃え" className="w-[22px]"><Icon w={14} h={14} color="#555"><path d="M0 1.500h14M2 4.500h10M0 7.500h14M2 10.500h10M0 13.500h14" /></Icon></MiniButton>
      <MiniButton label="塗りつぶしの色" className="w-[36px] gap-[7px]">
        <Icon w={16} h={18}>
          <path d="M2.500 8l5-5 4.500 4.500-5 5zM6 1v5M2.500 8H12" fill="#fff" />
          <path d="M11 4c3 0 3 3 3 6" stroke="#1e6fb8" strokeWidth="1.600" />
          <path d="M0 14h16v4H0z" fill="#ff0" stroke="none" />
        </Icon>
        <Chevron />
      </MiniButton>
      <MiniButton label="フォントの色" className="w-[37px] gap-[7px]">
        <Icon w={16} h={18}>
          <path d="M3.500 12L8 1.500h.3L12.500 12M5 8.500h6" />
          <path d="M0 14h16v4H0z" fill="#f00" stroke="none" />
        </Icon>
        <Chevron />
      </MiniButton>
      <MiniButton label="罫線" className="w-[37px] gap-[7px]">
        <Icon w={16} h={16} color="#999">
          <path d="M.5.500h15v14H.500zM8 .5v14M.5 7.500h15" strokeDasharray="1 1" />
          <path d="M0 14.500h16" stroke="#444" />
        </Icon>
        <Chevron />
      </MiniButton>
      <MiniButton label="小数点以下の表示桁数を増やす" className="w-[22px]"><DecimalIcon increase /></MiniButton>
      <MiniButton label="小数点以下の表示桁数を減らす" className="w-[22px]"><DecimalIcon /></MiniButton>
      <MiniButton label="書式のコピー/貼り付け" className="w-[24px]">
        <Icon w={16} h={16}>
          <path d="M9.500 6.500l4-5 1.500 1.500-4.500 4.500" />
          <path d="M6 5.500l5 4.500-1.500 2-5.500-5z" fill="#fff" />
          <path d="M4 7.500L.500 9 6 15l3.500-3z" fill="#f9b573" stroke="#f28c28" />
        </Icon>
      </MiniButton>
    </div>
  </div>
);

/* ---------- context menu ---------- */

const ClipboardIcon = ({ children }: { children?: ReactNode }) => (
  <Icon w={22} h={24}>
    <path d="M1.500 4.500h15v16h-15z" fill="#fff" stroke="#f0a860" strokeWidth="1.800" />
    <path d="M4.500 6.500v-3h2c0-3 5-3 5 0h2v3z" fill="#fff" stroke="#777" strokeWidth="1.200" />
    {children}
  </Icon>
);

const PASTE_OPTIONS: { label: string; art: ReactNode }[] = [
  { label: "貼り付け", art: <path d="M11.500 10.500h9v12h-9z" fill="#fff" stroke="#666" strokeWidth="1.300" /> },
  {
    label: "値",
    art: (
      <>
        <path d="M5 14h17v10H5z" fill="#fff" stroke="none" />
        <text x="5" y="23" stroke="none" fill="#444" fontSize="10" fontFamily="Liberation Sans, sans-serif">123</text>
      </>
    ),
  },
  {
    label: "数式",
    art: (
      <>
        <path d="M9 10h13v14H9z" fill="#fff" stroke="none" />
        <text x="10" y="21" stroke="none" fill="#333" fontSize="15" fontStyle="italic" fontFamily="Liberation Serif, serif">fx</text>
      </>
    ),
  },
  {
    label: "行/列の入れ替え",
    art: (
      <>
        <path d="M9 10h13v14H9z" fill="#fff" stroke="none" />
        <path d="M9.500 19.500h8v-7M14.500 15l3-3 3 3M12.500 16.500l-3 3 3 3" stroke={BLUE} strokeWidth="1.300" />
      </>
    ),
  },
  {
    label: "書式設定",
    art: (
      <>
        <text x="3" y="15" stroke="none" fill={BLUE} fontSize="10" fontFamily="Liberation Sans, sans-serif">%</text>
        <path d="M20.500 8.500l-10 9 2 2 9-10z" fill="#fff" strokeWidth="1.200" />
        <path d="M10 17c-3 0-3 4-7 4.500 4 3 9 1 9-2.500z" fill={BLUE} stroke={BLUE} />
      </>
    ),
  },
  {
    label: "リンク貼り付け",
    art: (
      <>
        <path d="M6 12h16v12H6z" fill="#fff" stroke="none" />
        <ellipse cx="11" cy="17" rx="4.500" ry="3" stroke={BLUE} strokeWidth="1.300" />
        <ellipse cx="17" cy="19.500" rx="4" ry="2.800" stroke={BLUE} strokeWidth="1.300" />
      </>
    ),
  },
];

const CutIcon = () => (
  <Icon><path d="M6 2l6 10.500M12 2L6 12.500" /><circle cx="5.500" cy="14" r="2" stroke={BLUE} /><circle cx="12.500" cy="14" r="2" stroke={BLUE} /></Icon>
);
const CopyIcon = () => (
  <Icon><path d="M7 14.500H1.500v-13h6v2" fill="#fff" /><path d="M7.500 4.500h5l4 4v8h-9zM12.500 4.500v4h4M9.500 11.500h5M9.500 13.500h5" fill="#fff" /></Icon>
);
const PasteIcon = () => (
  <Icon><path d="M2.500 3.500h11v11.500h-11z" fill="#fff" stroke="#f0a860" strokeWidth="1.400" /><path d="M5.500 4.500v-2h1c0-2 3-2 3 0h1v2z" fill="#fff" /><path d="M9.500 7.500h6v9h-6z" fill="#fff" /></Icon>
);
const LookupIcon = () => (
  <Icon color={BLUE} sw={1.2}><circle cx="11" cy="6.500" r="5.300" /><path d="M7 10.500l-5.500 5.500M11 6v3.500M11 3.500v1.200" /></Icon>
);
const QuickAnalysisIcon = () => (
  <Icon color="#666"><path d="M9 3.500h7.500v12h-15v-5M4 13.500h10.500M6 10.500h8M8 7.500h4v3" strokeWidth="1.300" /><path d="M4 1.500h4L6 5h2.500L2 11.500 3.500 7H1.500z" fill="#f9b573" stroke="#f07818" /></Icon>
);
const CommentIcon = () => (
  <Icon><path d="M8 3.500h8.500v9H8l-3 3v-3H2.500V8" /><path d="M4.500 1v6M1.500 4h6" stroke="#21a366" strokeWidth="1.200" /></Icon>
);
const NoteIcon = () => (
  <Icon><path d="M8 3.500h8.500v8l-4 4h-10V8M12.500 15.500v-4h4" /><path d="M4.500 1v6M1.500 4h6" stroke="#21a366" strokeWidth="1.200" /></Icon>
);
const PhoneticIcon = () => (
  <span className="flex flex-col items-center text-[8px] leading-[9px] text-[#666]"><span>ア</span><span>亜</span></span>
);
const LinkIcon = () => (
  <Icon sw={1.2}><ellipse cx="6.500" cy="8" rx="5" ry="3.500" /><ellipse cx="12" cy="10" rx="4.800" ry="3.500" /></Icon>
);

type MenuEntry =
  | { kind: "item"; text: string; keyChar: string; tail?: string; icon?: ReactNode; submenu?: boolean; split?: boolean; hover?: boolean }
  | { kind: "separator" }
  | { kind: "paste" };

const MENU: MenuEntry[] = [
  { kind: "item", text: "切り取り", keyChar: "T", icon: <CutIcon /> },
  { kind: "item", text: "コピー", keyChar: "C", icon: <CopyIcon />, hover: true },
  { kind: "paste" },
  { kind: "item", text: "形式を選択して貼り付け", keyChar: "S", tail: "...", submenu: true, split: true },
  { kind: "separator" },
  { kind: "item", text: "スマート検索", keyChar: "L", icon: <LookupIcon /> },
  { kind: "separator" },
  { kind: "item", text: "コピーしたセルの挿入", keyChar: "E", tail: "..." },
  { kind: "item", text: "削除", keyChar: "D", tail: "..." },
  { kind: "item", text: "数式と値のクリア", keyChar: "N" },
  { kind: "separator" },
  { kind: "item", text: "クイック分析", keyChar: "Q", icon: <QuickAnalysisIcon /> },
  { kind: "item", text: "フィルター", keyChar: "E", submenu: true },
  { kind: "item", text: "並べ替え", keyChar: "O", submenu: true },
  { kind: "separator" },
  { kind: "item", text: "新しいコメント", keyChar: "M", icon: <CommentIcon /> },
  { kind: "item", text: "新しいメモ", keyChar: "N", icon: <NoteIcon /> },
  { kind: "separator" },
  { kind: "item", text: "セルの書式設定", keyChar: "F", tail: "...", icon: <PropertiesIcon color="#555" /> },
  { kind: "item", text: "ドロップダウン リストから選択", keyChar: "K", tail: "..." },
  { kind: "item", text: "ふりがなの表示", keyChar: "S", icon: <PhoneticIcon /> },
  { kind: "item", text: "名前の定義", keyChar: "A", tail: "..." },
  { kind: "item", text: "リンク", keyChar: "I", icon: <LinkIcon />, submenu: true, split: true },
];

const ContextMenu = () => (
  <div role="menu" className="absolute top-[136px] left-[368px] z-20 w-[215px] border border-[#c8c6c4] bg-white text-[11px] text-[#222] shadow-[2px_2px_3px_rgba(0,0,0,0.2)]">
    {MENU.map((entry, i) => {
      if (entry.kind === "separator") {
        return <div key={i} className="ml-[29px] h-[2px] border-t border-[#e1dfdd]" />;
      }
      if (entry.kind === "paste") {
        return (
          <div key={i}>
            <div className="flex h-[24px] items-center gap-[4px] pl-[7px] font-bold"><PasteIcon />貼り付けのオプション:</div>
            <div className="flex h-[30px] items-center gap-[8px] pl-[32px]">
              {PASTE_OPTIONS.map((option) => (
                <button key={option.label} aria-label={option.label}><ClipboardIcon>{option.art}</ClipboardIcon></button>
              ))}
            </div>
          </div>
        );
      }
      return (
        <button key={i} role="menuitem" className={clsx("flex h-[24px] w-full items-center pl-[6px]", entry.hover && "bg-[#d0cecd]")}>
          <span className="mr-[5px] w-[18px]">{entry.icon}</span>
          <span>{entry.text}(<u className="underline-offset-2">{entry.keyChar}</u>){entry.tail}</span>
          {entry.submenu && (
            <span className={clsx("mr-[7px] ml-auto flex h-[14px] items-center pl-[8px]", entry.split && "border-l border-[#e1dfdd]")}>
              <Icon w={7} h={11} sw={1.3}><path d="M1 1l4.500 4.500L1 10" /></Icon>
            </span>
          )}
        </button>
      );
    })}
  </div>
);

const App = () => (
  // proportional kana, as in the desktop's UI font
  <div className="flex h-screen flex-col overflow-hidden bg-[#f3f2f1] font-[DejaVu_Sans,Noto_Sans_CJK_JP,sans-serif] whitespace-nowrap [font-feature-settings:'palt']" lang="ja">
    <TitleBar />
    <TabBar />
    <Ribbon />
    <InfoBar />
    <FormulaBar />
    <main className="relative flex min-h-0 flex-1 flex-col">
      <div className="flex min-h-0 flex-1 bg-[#e6e6e6]">
        <Sheet />
        <VerticalScrollbar />
      </div>
      <SheetTabs />
      <MiniToolbar />
      <ContextMenu />
    </main>
    <StatusBar />
  </div>
);

export default App;
